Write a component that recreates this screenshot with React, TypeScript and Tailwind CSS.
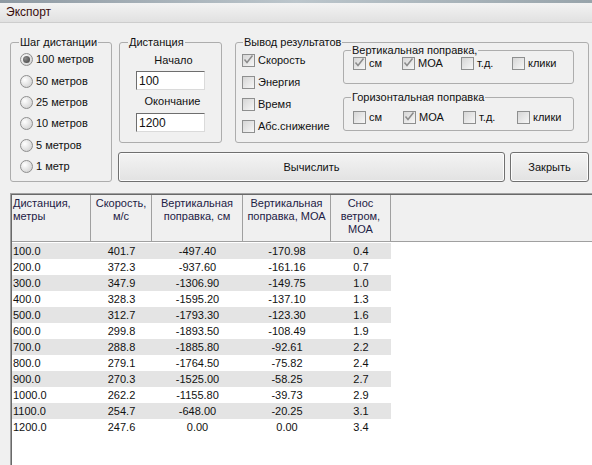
import React from 'react'

const rows: string[][] = [
  ['100.0', '401.7', '-497.40', '-170.98', '0.4'],
  ['200.0', '372.3', '-937.60', '-161.16', '0.7'],
  ['300.0', '347.9', '-1306.90', '-149.75', '1.0'],
  ['400.0', '328.3', '-1595.20', '-137.10', '1.3'],
  ['500.0', '312.7', '-1793.30', '-123.30', '1.6'],
  ['600.0', '299.8', '-1893.50', '-108.49', '1.9'],
  ['700.0', '288.8', '-1885.80', '-92.61', '2.2'],
  ['800.0', '279.1', '-1764.50', '-75.82', '2.4'],
  ['900.0', '270.3', '-1525.00', '-58.25', '2.7'],
  ['1000.0', '262.2', '-1155.80', '-39.73', '2.9'],
  ['1100.0', '254.7', '-648.00', '-20.25', '3.1'],
  ['1200.0', '247.6', '0.00', '0.00', '3.4'],
]

const widths = ['w-[79px]', 'w-[61px]', 'w-[91px]', 'w-[88px]', 'w-[60px]']

function Radio({ checked }: { checked?: boolean }) {
  return (
    <span className="w-[13px] h-[13px] shrink-0 rounded-full border border-[#8f8f8f] bg-radial-[at_35%_35%] from-white to-[#c9c9c9] flex items-center justify-center">
      {checked && <span className="w-[7px] h-[7px] rounded-full bg-radial-[at_35%_35%] from-[#8a8a8a] to-[#3f3f3f]" />}
    </span>
  )
}

function Check({ checked }: { checked?: boolean }) {
  return (
    <span className="relative w-[13px] h-[13px] shrink-0 border border-[#8e8f8f] bg-linear-to-br from-[#d6d6d6] to-[#f7f7f7]">
      {checked && (
        <svg viewBox="0 0 13 13" className="absolute -left-px -top-[2px] w-[13px] h-[13px]">
          <path d="M2.5 6.5 L5 9.5 L10.5 2.5" stroke="#8c8c8c" strokeWidth="1.5" fill="none" />
        </svg>
      )}
    </span>
  )
}

function Option({ label, checked, className }: { label: string; checked?: boolean; className?: string }) {
  return (
    <div className={`flex items-center gap-[3px] ${className ?? ''}`}>
      <Check checked={checked} />
      <span>{label}</span>
    </div>
  )
}

const legend = 'ml-[7px] px-[1px] leading-[13px]'
const group = 'border border-[#adadad] rounded-[3px] p-0 m-0'

export default function App() {
  return (
    <div className="w-[592px] h-[465px] overflow-hidden bg-[#f0f0f0] text-[11px] leading-[13px] text-[#111] font-['Liberation_Sans',Arial,sans-serif] flex flex-col">
      <div className="h-[3px] bg-linear-to-r from-[#8f9aa3] via-[#bcc6cc] to-[#98a4ab]" />
      <div className="h-[20px] shrink-0 bg-linear-to-b from-[#f3f3f3] to-[#e1e1e1] border-b border-[#cdcdcd] pl-[6px] flex items-center text-[12px] text-[#3a0d0d]">
        Экспорт
      </div>

      <div className="flex pl-[10px] pt-[13px]">
        <fieldset className={`${group} w-[102px] h-[146px]`}>
          <legend className={`${legend} ml-[8px]`}>Шаг дистанции</legend>
          <div className="pl-[9px]">
            {['100 метров', '50 метров', '25 метров', '10 метров', '5 метров', '1 метр'].map((t, i) => (
              <div key={t} className="h-[21.4px] flex items-center gap-[3px]">
                <Radio checked={i === 0} />
                <span>{t}</span>
              </div>
            ))}
          </div>
        </fieldset>

        <div className="ml-[7px] flex flex-col">
          <div className="flex">
            <fieldset className={`${group} w-[103px] h-[107px]`}>
              <legend className={`${legend} ml-[8px]`}>Дистанция</legend>
              <div className="h-[22px] flex items-center justify-center pl-[6px]">Начало</div>
              <input
                readOnly
                value="100"
                className="ml-[16px] w-[69px] h-[19px] bg-white px-[2px] border border-t-[#6e6e6e] border-l-[#6e6e6e] border-r-[#dadada] border-b-[#dadada] outline-none text-[12px]"
              />
              <div className="h-[23px] flex items-center justify-center pl-[4px]">Окончание</div>
              <input
                readOnly
                value="1200"
                className="ml-[16px] w-[69px] h-[19px] bg-white px-[2px] border border-t-[#6e6e6e] border-l-[#6e6e6e] border-r-[#dadada] border-b-[#dadada] outline-none text-[12px]"
              />
            </fieldset>

            <fieldset className={`${group} ml-[13px] w-[354px] h-[107px]`}>
              <legend className={legend}>Вывод результатов</legend>
              <div className="flex">
                <div className="w-[107px] pl-[6px]">
                  <Option label="Скорость" checked className="h-[22px]" />
                  <Option label="Энергия" className="h-[22px]" />
                  <Option label="Время" className="h-[22px]" />
                  <Option label="Абс.снижение" className="h-[22px]" />
                </div>
                <div className="flex flex-col -mt-[5px]">
                  <fieldset className={`${group} w-[231px] h-[40px] flex`}>
                    <legend className={legend}>Вертикальная поправка,</legend>
                    <div className="flex items-center h-full pl-[9px]">
                      <Option label="см" checked className="w-[49px]" />
                      <Option label="МОА" checked className="w-[59px]" />
                      <Option label="т.д." className="w-[51px]" />
                      <Option label="клики" />
                    </div>
                  </fieldset>
                  <fieldset className={`${group} mt-[7px] w-[231px] h-[40px]`}>
                    <legend className={legend}>Горизонтальная поправка</legend>
                    <div className="flex items-center h-[26px] pl-[9px]">
                      <Option label="см" className="w-[50px]" />
                      <Option label="МОА" checked className="w-[60px]" />
                      <Option label="т.д." className="w-[54px]" />
                      <Option label="клики" />
                    </div>
                  </fieldset>
                </div>
              </div>
            </fieldset>
          </div>

          <div className="flex gap-[5px] mt-[9px] -ml-px">
            <button className="w-[387px] h-[30px] rounded-[3px] border border-[#707070] bg-linear-to-b from-[#f4f4f4] to-[#e2e2e2] shadow-[inset_0_0_0_1px_#fcfcfc]">
              Вычислить
            </button>
            <button className="w-[79px] h-[30px] rounded-[3px] border border-[#707070] bg-linear-to-b from-[#f4f4f4] to-[#e2e2e2] shadow-[inset_0_0_0_1px_#fcfcfc]">
              Закрыть
            </button>
          </div>
        </div>
      </div>

      <div className="ml-[10px] mt-[11px] flex-1 border-l border-t border-[#a0a0a0]">
        <div className="h-full bg-white border-l border-t border-[#696969]">
          <div className="flex h-[47px] bg-[#f0f0f0] border-b border-[#a0a0a0] text-[#1d2145]">
            <div className={`${widths[0]} border-r border-[#a0a0a0] pt-[2px] pl-px`}>
              Дистанция,
              <br />
              метры
            </div>
            <div className={`${widths[1]} border-r border-[#a0a0a0] pt-[2px] text-center`}>
              Скорость,
              <br />
              м/с
            </div>
            <div className={`${widths[2]} border-r border-[#a0a0a0] pt-[2px] text-center`}>
              Вертикальная
              <br />
              поправка, см
            </div>
            <div className={`${widths[3]} border-r border-[#a0a0a0] pt-[2px] text-center`}>
              Вертикальная
              <br />
              поправка, МОА
            </div>
            <div className={`${widths[4]} border-r border-[#a0a0a0] pt-[2px] text-center`}>
              Снос
              <br />
              ветром,
              <br />
              МОА
            </div>
            <div className="flex-1" />
          </div>
          <div className="pt-px">
            {rows.map((r, i) => (
              <div key={r[0]} className={`flex w-[379px] h-[16px] leading-[16px] ${i % 2 === 0 ? 'bg-[#e4e4e4]' : ''}`}>
                {r.map((v, j) => (
                  <div key={j} className={`${widths[j]} ${j === 0 ? 'pl-px' : 'text-center'}`}>
                    {v}
                  </div>
                ))}
              </div>
            ))}
          </div>
        </div>
      </div>
    </div>
  )
}
